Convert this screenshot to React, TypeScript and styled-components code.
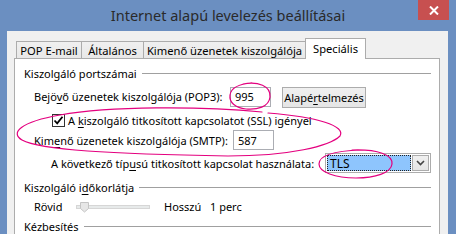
import React from 'react';
import styled, { createGlobalStyle } from 'styled-components';

const GlobalStyle = createGlobalStyle`
    html, body {
        margin: 0;
        padding: 0;
    }
    body {
        font-family: "Noto Sans", "Open Sans", sans-serif;
    }
`;

const Window = styled.div`
    position: relative;
    width: 456px;
    height: 234px;
    background: #6b8fc1;
    overflow: hidden;
    display: flex;
    flex-direction: column;
`;

const TitleBar = styled.div`
    position: relative;
    height: 31px;
    flex-shrink: 0;
    display: flex;
    align-items: center;
    justify-content: center;
`;

const Title = styled.div`
    font-size: 14.5px;
    color: #2a2a2a;
    padding-bottom: 1px;
`;

const CloseButton = styled.div`
    position: absolute;
    top: 0;
    right: 7px;
    width: 31px;
    height: 20px;
    background: #c75050;
    display: flex;
    align-items: center;
    justify-content: center;
`;

const Client = styled.div`
    flex: 1;
    margin: 0 8px 0 7px;
    padding: 7px 8px 0 7px;
    background: #f0f0f0;
    display: flex;
    flex-direction: column;
    min-height: 0;
`;

const TabStrip = styled.div`
    display: flex;
    align-items: flex-end;
    height: 20px;
    padding-left: 2px;
    position: relative;
    z-index: 1;
`;

const Tab = styled.div<{ $w: number; $active?: boolean }>`
    box-sizing: border-box;
    width: ${({ $w }) => $w}px;
    height: ${({ $active }) => ($active ? 21 : 17)}px;
    margin-left: -1px;
    margin-bottom: ${({ $active }) => ($active ? -1 : 0)}px;
    border: 1px solid #acacac;
    border-bottom: none;
    background: ${({ $active }) =>
        $active ? '#ffffff' : 'linear-gradient(#f0f0f0, #e8e8e8)'};
    font-size: 11.2px;
    color: #000;
    display: flex;
    align-items: ${({ $active }) => ($active ? 'flex-start' : 'center')};
    padding-top: ${({ $active }) => ($active ? 2 : 0)}px;
    justify-content: center;
    white-space: nowrap;
    &:first-child {
        margin-left: 0;
    }
`;

const Panel = styled.div`
    flex: 1;
    background: #fff;
    border: 1px solid #acacac;
    border-bottom: none;
    padding-top: 7px;
    font-size: 11px;
    color: #000;
    display: flex;
    flex-direction: column;
    overflow: hidden;
`;

const GroupHeader = styled.div<{ $top: number }>`
    display: flex;
    align-items: center;
    height: 16px;
    margin-top: ${({ $top }) => $top}px;
    padding: 0 8px 0 9px;
    white-space: nowrap;
    &::after {
        content: '';
        flex: 1;
        height: 1px;
        margin-left: 5px;
        background: #a0a0a0;
    }
`;

const Row = styled.div<{ $top: number; $indent: number; $h: number }>`
    display: flex;
    align-items: center;
    height: ${({ $h }) => $h}px;
    margin-top: ${({ $top }) => $top}px;
    padding-left: ${({ $indent }) => $indent}px;
    white-space: nowrap;
`;

const Label = styled.span<{ $w?: number }>`
    flex-shrink: 0;
    ${({ $w }) => ($w ? `width: ${$w}px;` : '')}
`;

const U = styled.span`
    text-decoration: underline;
    text-underline-offset: 2px;
`;

const TextBox = styled.div`
    box-sizing: border-box;
    width: 41px;
    height: 20px;
    border: 1px solid #abadb3;
    background: #fff;
    padding-left: 4px;
    display: flex;
    align-items: center;
`;

const Button = styled.div`
    box-sizing: border-box;
    width: 84px;
    height: 21px;
    margin-left: 11px;
    margin-top: 1px;
    border: 1px solid #acacac;
    background: linear-gradient(#f0f0f0, #e5e5e5);
    display: flex;
    align-items: center;
    justify-content: center;
`;

const CheckBox = styled.div`
    box-sizing: border-box;
    width: 13px;
    height: 13px;
    border: 1px solid #333;
    background: #fff;
    margin-right: 3px;
    display: flex;
    align-items: center;
    justify-content: center;
`;

const Combo = styled.div`
    box-sizing: border-box;
    width: 106px;
    height: 20px;
    border: 1px solid #acacac;
    background: #fff;
    display: flex;
    padding: 1px;
    gap: 1px;
`;

const ComboValue = styled.div`
    flex: 1;
    box-sizing: border-box;
    background: #8ec5fd;
    border: 1px dotted #222;
    padding-left: 2px;
    display: flex;
    align-items: center;
    font-size: 12px;
`;

const ComboArrow = styled.div`
    box-sizing: border-box;
    width: 17px;
    border: 1px solid #acacac;
    background: linear-gradient(#f0f0f0, #e5e5e5);
    display: flex;
    align-items: center;
    justify-content: center;
`;

const SliderTrack = styled.div`
    position: relative;
    box-sizing: border-box;
    width: 74px;
    height: 4px;
    margin: 0 14px 0 15px;
    background: #e7eaea;
    border: 1px solid #d6d6d6;
`;

const SliderThumb = styled.svg`
    position: absolute;
    left: 3px;
    top: -4px;
`;

const Annotations = styled.svg`
    position: absolute;
    left: 0;
    top: 0;
    pointer-events: none;
    z-index: 5;
`;

export default function App() {
    return (
        <>
            <GlobalStyle />
            <Window>
                <TitleBar>
                    <Title>Internet alapú levelezés beállításai</Title>
                    <CloseButton>
                        <svg width="10" height="9" viewBox="0 0 10 9">
                            <path d="M1 0.5 L9 8.5 M9 0.5 L1 8.5" stroke="#fff" strokeWidth="2" />
                        </svg>
                    </CloseButton>
                </TitleBar>
                <Client>
                    <TabStrip>
                        <Tab $w={66}>POP E-mail</Tab>
                        <Tab $w={63}>Általános</Tab>
                        <Tab $w={163}>Kimenő üzenetek kiszolgálója</Tab>
                        <Tab $w={61} $active>
                            Speciális
                        </Tab>
                    </TabStrip>
                    <Panel>
                        <GroupHeader $top={0}>Kiszolgáló portszámai</GroupHeader>
                        <Row $top={5} $indent={19} $h={21}>
                            <Label $w={196}>
                                Bejö<U>v</U>ő üzenetek kiszolgálója (POP3):
                            </Label>
                            <TextBox>995</TextBox>
                            <Button>
                                Alapé<U>r</U>telmezés
                            </Button>
                        </Row>
                        <Row $top={5} $indent={37} $h={18}>
                            <CheckBox>
                                <svg width="11" height="11" viewBox="0 0 11 11">
                                    <path
                                        d="M1.5 5.5 L4.2 8.3 L9.5 1.8"
                                        fill="none"
                                        stroke="#000"
                                        strokeWidth="1.8"
                                    />
                                </svg>
                            </CheckBox>
                            <Label>
                                A <U>k</U>iszolgáló titkosított kapcsolatot (SSL) igényel
                            </Label>
                        </Row>
                        <Row $top={2} $indent={19} $h={20}>
                            <Label $w={199}>
                                Kim<U>e</U>nő üzenetek kiszolgálója (SMTP):
                            </Label>
                            <TextBox>587</TextBox>
                        </Row>
                        <Row $top={3} $indent={36} $h={20}>
                            <Label $w={274}>
                                A következő típ<U>u</U>sú titkosított kapcsolat használata:
                            </Label>
                            <Combo>
                                <ComboValue>TLS</ComboValue>
                                <ComboArrow>
                                    <svg width="9" height="6" viewBox="0 0 9 6">
                                        <path
                                            d="M1 1 L4.5 4.5 L8 1"
                                            fill="none"
                                            stroke="#444"
                                            strokeWidth="1.6"
                                        />
                                    </svg>
                                </ComboArrow>
                            </Combo>
                        </Row>
                        <GroupHeader $top={7}>
                            Kiszolgáló i<U>d</U>őkorlátja
                        </GroupHeader>
                        <Row $top={4} $indent={19} $h={16}>
                            <Label $w={27}>Rövid</Label>
                            <SliderTrack>
                                <SliderThumb width="9" height="11" viewBox="0 0 9 11">
                                    <path
                                        d="M0.5 0.5 H8.5 V6.5 L4.5 10 L0.5 6.5 Z"
                                        fill="#e6e6e6"
                                        stroke="#c4c4c4"
                                    />
                                </SliderThumb>
                            </SliderTrack>
                            <Label $w={46}>Hosszú</Label>
                            <Label>1 perc</Label>
                        </Row>
                        <GroupHeader $top={5}>Kézbesítés</GroupHeader>
                    </Panel>
                </Client>
                <Annotations width="456" height="234" viewBox="0 0 456 234">
                    <g fill="none" stroke="#e4007f" strokeWidth="1.2" strokeLinecap="round">
                        <path d="M243 84 C258 81 271 86 270 97 C269 107 257 110 246 109 C235 108 229 102 230 95 C231 88 238 84 252 83" />
                        <path d="M262 112 C200 106 110 106 60 115 C20 122 10 133 22 140 C40 150 110 154 228 156 C290 156 330 146 340 136 C346 126 318 117 268 113" />
                        <path d="M352 150 C378 149 393 155 392 164 C391 173 375 178 356 178 C335 178 319 172 319 164 C319 156 332 151 361 150" />
                    </g>
                </Annotations>
            </Window>
        </>
    );
}
